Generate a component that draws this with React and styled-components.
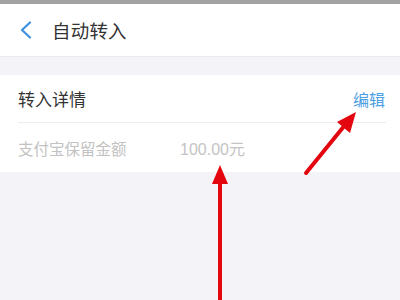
import React from "react"
import styled, { createGlobalStyle } from "styled-components"

const Global = createGlobalStyle`
  html, body {
    margin: 0;
    padding: 0;
    background: #f4f4f8;
    font-family: "Noto Sans CJK SC", "Liberation Sans", sans-serif;
  }
`

const Page = styled.div`
  position: relative;
  width: 400px;
  height: 300px;
  overflow: hidden;
  background: #f4f4f8;
`

const StatusStrip = styled.div`
  height: 4px;
  background: #a3a3a3;
`

const Header = styled.div`
  height: 53px;
  background: #fff;
  display: flex;
  align-items: center;
  padding-left: 19px;
  gap: 19px;
  border-bottom: 1px solid #ececf0;
  box-sizing: border-box;
`

const Title = styled.div`
  font-size: 18.5px;
  color: #333;
  letter-spacing: 0.2px;
`

const Card = styled.div`
  margin-top: 18px;
  background: #fff;
  padding-left: 18px;
  padding-right: 14px;
`

const Row = styled.div`
  height: ${p => p.h}px;
  display: flex;
  align-items: center;
  border-bottom: ${p => (p.divider ? "1px solid #eeeef0" : "none")};
  box-sizing: border-box;
`

const Label = styled.div`
  font-size: ${p => p.size}px;
  color: ${p => p.color};
  width: ${p => (p.w ? p.w + "px" : "auto")};
  flex: ${p => (p.w ? "none" : "1")};
`

const Value = styled.div`
  font-size: 16px;
  color: #c4c4c4;
  font-family: "Liberation Sans", "Noto Sans CJK SC", sans-serif;
`

const Edit = styled.div`
  font-size: 16px;
  color: #4c9ee2;
  margin-right: 1px;
`

const Arrows = styled.svg`
  position: absolute;
  left: 0;
  top: 0;
  pointer-events: none;
`

const Chevron = () => (
  <svg width="14" height="18" viewBox="0 0 14 18">
    <path d="M11 1.5 L3 9 L11 16.5" fill="none" stroke="#3d8fe0" strokeWidth="2.2" strokeLinecap="round" strokeLinejoin="round" />
  </svg>
)

export default function App() {
  return (
    <Page>
      <Global />
      <StatusStrip />
      <Header>
        <Chevron />
        <Title>自动转入</Title>
      </Header>
      <Card>
        <Row h={48} divider>
          <Label size={17} color="#333">转入详情</Label>
          <Edit>编辑</Edit>
        </Row>
        <Row h={49}>
          <Label size={15.5} color="#c2c2c2" w={162}>支付宝保留金额</Label>
          <Value>100.00元</Value>
        </Row>
      </Card>
      <Arrows width="400" height="300" viewBox="0 0 400 300">
        <line x1="306" y1="173" x2="345" y2="125" stroke="#e3060f" strokeWidth="4" strokeLinecap="round" />
        <polygon points="356,112 337,122 350,133" fill="#e3060f" />
        <line x1="220" y1="300" x2="220" y2="180" stroke="#e3060f" strokeWidth="4" />
        <polygon points="220,165 212,184 228,184" fill="#e3060f" />
      </Arrows>
    </Page>
  )
}
